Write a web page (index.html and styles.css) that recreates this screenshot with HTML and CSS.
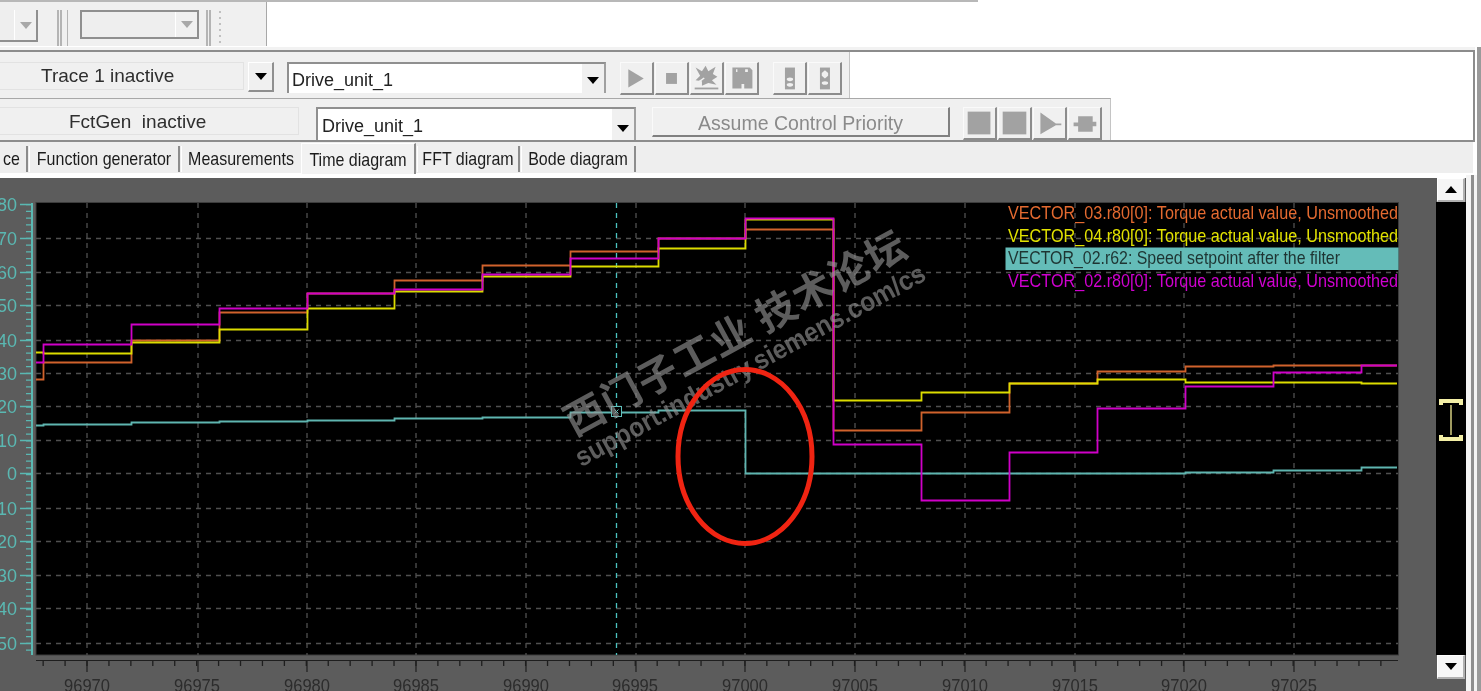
FILE: index.html
```html
<!DOCTYPE html>
<html lang="en">
<head>
    <meta charset="UTF-8" />
    <meta name="viewport" content="width=device-width, initial-scale=1.0" />
    <title>Time diagram</title>
    <link rel="stylesheet" href="styles.css">
</head>
<body>

    <!-- Top toolbar -->
    <div class="top-strip">
        <div class="top-tools">
            <div class="mini-combo first"><span class="combo-btn"><i class="arrow gray"></i></span></div>
            <div class="grip"></div>
            <div class="grip-bar"></div>
            <div class="mini-combo second"><span class="combo-btn"><i class="arrow gray"></i></span></div>
            <div class="grip"></div>
            <div class="dots"></div>
        </div>
    </div>

    <div class="upper-frame">
        <!-- Trace row -->
        <div class="control-row trace-row">
            <div class="status-label trace-label">Trace 1 inactive</div>
            <button class="arrow-btn"><i class="arrow"></i></button>
            <div class="combo trace-combo">
                <span>Drive_unit_1</span>
                <span class="combo-btn"><i class="arrow"></i></span>
            </div>
            <div class="icon-group">
                <button class="icon-btn"><svg viewBox="0 0 34 33"><path d="M8 7 L25 17 L8 27 Z"/></svg></button>
                <button class="icon-btn"><svg viewBox="0 0 34 33"><rect x="11" y="11" width="12" height="12"/></svg></button>
                <button class="icon-btn"><svg viewBox="0 0 34 33"><path d="M5 5 L12 9 L16 3 L19 9 L27 4 L24 12 L29 15 L23 19 L28 24 L19 22 L12 25 L12 20 L5 19 L10 14 Z"/><path d="M4 27 L30 27 L30 29 L4 29 Z"/><path class="cut" d="M5 22 L14 16 L15 17 L6 24 Z"/></svg></button>
                <button class="icon-btn"><svg viewBox="0 0 34 33"><path d="M7 5 H26 L29 8 V28 H20 V23 H17 V28 H7 Z M11 7 L11 10 L12.5 10 L12.5 7 Z M21 7 V10 H24 V7 Z" fill-rule="evenodd"/></svg></button>
            </div>
            <div class="icon-group">
                <button class="icon-btn"><svg viewBox="0 0 34 33"><path d="M12 5 H23 V29 H12 Z"/><ellipse class="cut" cx="17.5" cy="18" rx="3.5" ry="2"/><ellipse class="cut" cx="17.5" cy="24" rx="3.5" ry="2"/></svg></button>
                <button class="icon-btn"><svg viewBox="0 0 34 33"><path d="M12 5 H23 V29 H12 Z"/><path class="cut" d="M14 11 L17.5 8 L21 11 L21 14 L17.5 17 L14 14 Z"/><ellipse class="cut" cx="17.5" cy="22" rx="3.5" ry="2"/></svg></button>
            </div>
        </div>

        <!-- Function generator row -->
        <div class="control-row fct-row">
            <div class="status-label fct-label">FctGen&nbsp; inactive</div>
            <div class="combo fct-combo">
                <span>Drive_unit_1</span>
                <span class="combo-btn"><i class="arrow"></i></span>
            </div>
            <button class="assume-btn">Assume Control Priority</button>
            <div class="icon-group fct-icons">
                <button class="icon-btn"><svg viewBox="0 0 34 33"><rect x="4" y="4" width="25" height="25"/></svg></button>
                <button class="icon-btn"><svg viewBox="0 0 34 33"><rect x="4" y="4" width="26" height="25"/></svg></button>
                <button class="icon-btn"><svg viewBox="0 0 34 33"><path d="M7 5 L24 17 H30 V19 H24 L7 29 Z"/></svg></button>
                <button class="icon-btn"><svg viewBox="0 0 34 33"><path d="M10 9 H26 V15 H30 V20 H26 V26 H10 V20 H5 V16 H10 Z"/></svg></button>
            </div>
        </div>
    </div>

    <!-- Tabs -->
    <div class="tab-bar">
        <div class="tab tab-cut"><span>ce</span></div>
        <div class="tab tab-fn"><span>Function generator</span></div>
        <div class="tab tab-meas"><span>Measurements</span></div>
        <div class="tab tab-time active"><span>Time diagram</span></div>
        <div class="tab tab-fft"><span>FFT diagram</span></div>
        <div class="tab tab-bode"><span>Bode diagram</span></div>
    </div>

    <!-- Plot area -->
    <div class="plot-panel">
        <svg class="chart" viewBox="0 178 1436 513">
            <rect class="plot-bg" x="36" y="202.5" width="1362.5" height="452.5"/>

            <!-- grid -->
            <path class="grid" d="M36 238.5H1398 M36 272.5H1398 M36 305.5H1398 M36 340.5H1398 M36 373.5H1398 M36 406.5H1398 M36 440.5H1398 M36 473.5H1398 M36 508.5H1398 M36 541.5H1398 M36 575.5H1398 M36 608.5H1398 M36 643.5H1398"/>
            <path class="grid" d="M87 203V655 M198 203V655 M307 203V655 M416 203V655 M526 203V655 M636 203V655 M745 203V655 M855 203V655 M965 203V655 M1075 203V655 M1184 203V655 M1294 203V655"/>

            <!-- left axis -->
            <path class="axis-y" d="M32 203V655"/>
            <line class="axis-minor" x1="28.5" x2="28.5" y1="204" y2="655"/>
            <path class="axis-major" d="M20 204.5H31 M20 238.5H31 M20 272.5H31 M20 305.5H31 M20 340.5H31 M20 373.5H31 M20 406.5H31 M20 440.5H31 M20 473.5H31 M20 508.5H31 M20 541.5H31 M20 575.5H31 M20 608.5H31 M20 643.5H31"/>
            <g class="y-labels">
                <text x="17" y="211">80</text>
                <text x="17" y="245">70</text>
                <text x="17" y="279">60</text>
                <text x="17" y="312">50</text>
                <text x="17" y="347">40</text>
                <text x="17" y="380">30</text>
                <text x="17" y="413">20</text>
                <text x="17" y="447">10</text>
                <text x="17" y="480">0</text>
                <text x="17" y="515">10</text>
                <text x="17" y="548">20</text>
                <text x="17" y="582">30</text>
                <text x="17" y="615">40</text>
                <text x="17" y="650">50</text>
            </g>

            <!-- bottom axis -->
            <path class="axis-x" d="M36 660.5H1398"/>
            <line class="axis-x-minor" x1="42.5" x2="1398" y1="663.5" y2="663.5"/>
            <path class="axis-x-major" d="M87 661V672 M198 661V672 M307 661V672 M416 661V672 M526 661V672 M636 661V672 M745 661V672 M855 661V672 M965 661V672 M1075 661V672 M1184 661V672 M1294 661V672"/>
            <g class="x-labels">
                <text x="87" y="692" textLength="46" lengthAdjust="spacingAndGlyphs">96970</text>
                <text x="197" y="692" textLength="46" lengthAdjust="spacingAndGlyphs">96975</text>
                <text x="307" y="692" textLength="46" lengthAdjust="spacingAndGlyphs">96980</text>
                <text x="416" y="692" textLength="46" lengthAdjust="spacingAndGlyphs">96985</text>
                <text x="526" y="692" textLength="46" lengthAdjust="spacingAndGlyphs">96990</text>
                <text x="635" y="692" textLength="46" lengthAdjust="spacingAndGlyphs">96995</text>
                <text x="745" y="692" textLength="46" lengthAdjust="spacingAndGlyphs">97000</text>
                <text x="855" y="692" textLength="46" lengthAdjust="spacingAndGlyphs">97005</text>
                <text x="965" y="692" textLength="46" lengthAdjust="spacingAndGlyphs">97010</text>
                <text x="1075" y="692" textLength="46" lengthAdjust="spacingAndGlyphs">97015</text>
                <text x="1184" y="692" textLength="46" lengthAdjust="spacingAndGlyphs">97020</text>
                <text x="1294" y="692" textLength="46" lengthAdjust="spacingAndGlyphs">97025</text>
            </g>

            <!-- cursor -->
            <line class="cursor" x1="616.5" x2="616.5" y1="203" y2="655"/>

            <!-- traces -->
            <path class="trace orange" d="M36 379.5H43.5V362.5H131.5V340.5H219.5V312.5H307.5V293.5H394.5V280.5H482.5V265.5H570.5V251.5H658.5V238.5H745.5V229.5H833.5V430.5H921.5V412.5H1009.5V383.5H1097.5V371.5H1185.5V366.5H1273.5V365.5H1397"/>
            <path class="trace yellow" d="M36 352.5H43.5V353.5H131.5V342.5H219.5V329.5H307.5V308.5H394.5V291.5H482.5V276.5H570.5V266.5H658.5V248.5H745.5V219.5H833.5V400.5H921.5V392.5H1009.5V383.5H1097.5V379.5H1185.5V382.5H1361.5V383.5H1397"/>
            <path class="trace teal" d="M36 425.5H43.5V424.5H131.5V422.5H219.5V421.5H307.5V420.5H394.5V418.5H482.5V417.5H570.5V414.5H570.5V412.5H658.5V410.5H745.5V473.5H1185.5V472.5H1273.5V470.5H1361.5V467.5H1397"/>
            <path class="trace magenta" d="M36 362.5H43.5V344.5H131.5V324.5H219.5V308.5H307.5V293.5H394.5V289.5H482.5V274.5H570.5V258.5H658.5V238.5H745.5V218.5H833.5V444.5H921.5V500.5H1009.5V452.5H1097.5V408.5H1185.5V386.5H1273.5V372.5H1361.5V365.5H1397"/>

            <!-- cursor marker -->
            <g class="marker">
                <rect x="611.5" y="406.5" width="10" height="10"/>
                <path d="M614.5 409.5L618.5 413.5 M618.5 409.5L614.5 413.5"/>
            </g>

            <!-- legend -->
            <rect class="legend-sel" x="1005.5" y="247.5" width="393" height="22.5"/>
            <g class="legend">
                <text class="orange-text" x="1008" y="219" textLength="390" lengthAdjust="spacingAndGlyphs">VECTOR_03.r80[0]: Torque actual value, Unsmoothed</text>
                <text class="yellow-text" x="1008" y="241.5" textLength="390" lengthAdjust="spacingAndGlyphs">VECTOR_04.r80[0]: Torque actual value, Unsmoothed</text>
                <text class="sel-text" x="1008" y="264" textLength="332" lengthAdjust="spacingAndGlyphs">VECTOR_02.r62: Speed setpoint after the filter</text>
                <text class="magenta-text" x="1008" y="286.5" textLength="390" lengthAdjust="spacingAndGlyphs">VECTOR_02.r80[0]: Torque actual value, Unsmoothed</text>
            </g>

            <!-- watermark -->
            <g class="watermark" transform="translate(574 437) rotate(-28.5)">
                <text class="wm-cn" x="0" y="0" textLength="382">西门子工业 技术论坛</text>
                <text class="wm-en" x="-8" y="30" textLength="394" lengthAdjust="spacingAndGlyphs">support.industry.siemens.com/cs</text>
            </g>

            <!-- red mark -->
            <ellipse class="red-ring" cx="745" cy="456.5" rx="67" ry="87"/>
        </svg>

        <div class="scroll-col">
            <button class="scroll-btn up"><i class="arrow up"></i></button>
            <div class="scroll-track">
                <svg class="zoom-handle" viewBox="0 0 24 42">
                    <path d="M2 6V2H22V6 M2 36V40H22V36" class="handle-thick"/>
                    <path d="M12 6V36" class="handle-thin"/>
                </svg>
            </div>
            <button class="scroll-btn down"><i class="arrow"></i></button>
        </div>
        <div class="right-frame"></div>
    </div>

</body>
</html>
```

FILE: styles.css
```css
/* Global styles */
html,
body {
    margin: 0;
    height: 691px;
    overflow: hidden;
}

body {
    width: 1481px;
    background: linear-gradient(90deg, #fff 1477px, #9a9a9a 1477px) 0 47px / 100% 100% no-repeat;
    font-family: "Liberation Sans", Arial, sans-serif;
    color: #222;
    filter: blur(0.35px);
}

button {
    font-family: inherit;
    padding: 0;
    margin: 0;
}

/* Arrows */
.arrow {
    display: block;
    width: 0;
    height: 0;
    border-left: 6px solid transparent;
    border-right: 6px solid transparent;
    border-top: 7px solid #000;
}

.arrow.gray {
    border-top-color: #a8a8a8;
}

.arrow.up {
    border-top: 0;
    border-bottom: 7px solid #000;
}

/* Top toolbar */
.top-strip {
    height: 46px;
    box-sizing: border-box;
    border-top: 2px solid transparent;
    background: linear-gradient(#b8b8b8 0, #b8b8b8 2px, transparent 2px) 0 -2px / 978px 2px no-repeat;
}

.top-tools {
    width: 267px;
    height: 44px;
    box-sizing: border-box;
    padding-top: 8px;
    display: flex;
    background-color: #f0f0f0;
    border-right: 1px solid #a8a8a8;
}

.mini-combo {
    height: 32px;
    box-sizing: border-box;
    display: flex;
    justify-content: flex-end;
    background-color: #eee;
}

.mini-combo.first {
    width: 38px;
    border-right: 2px solid #8f8f8f;
    border-bottom: 2px solid #8f8f8f;
}

.mini-combo.second {
    width: 119px;
    height: 29px;
    border: 2px solid #8f8f8f;
    margin-left: 10px;
}

.mini-combo .combo-btn {
    width: 22px;
    background-color: #f0f0f0;
    border-left: 1px solid #fff;
    display: flex;
    align-items: center;
    justify-content: center;
    padding-top: 0;
}

.grip {
    width: 5px;
    height: 36px;
    margin-left: 19px;
    border-left: 2px solid #b4b4b4;
    border-right: 2px solid #b4b4b4;
    box-sizing: border-box;
}

.grip-bar {
    width: 3px;
    height: 36px;
    margin-left: 5px;
    border-left: 1px solid #b4b4b4;
    box-sizing: border-box;
}

.mini-combo.second + .grip {
    margin-left: 7px;
}

.dots {
    width: 2px;
    height: 32px;
    margin: 1px 0 0 8px;
    background: repeating-linear-gradient(#c0c0c0 0, #c0c0c0 2px, transparent 2px, transparent 6px);
}

/* Control rows */
.upper-frame {
    width: 1475px;
    margin-top: 4px;
    box-sizing: border-box;
    border-top: 2px solid #8c8c8c;
    border-right: 2px solid #8c8c8c;
    border-bottom: 2px solid #8c8c8c;
    box-shadow: 0 -3px 0 #f2f2f2;
    background-color: #fff;
}

.control-row {
    display: flex;
    box-sizing: border-box;
    background-color: #f0f0f0;
}

.trace-row {
    height: 46px;
    width: 850px;
    padding-top: 10px;
    border-right: 1px solid #c4c4c4;
}

.fct-row {
    height: 42px;
    width: 1111px;
    padding-top: 8px;
    border-top: 1px solid #a8a8a8;
    border-right: 1px solid #c4c4c4;
    overflow: hidden;
}

.status-label {
    box-sizing: border-box;
    border: 1px solid #e2e2e2;
    border-left: 0;
    font-size: 19px;
    white-space: nowrap;
    color: #2e2e2e;
}

.trace-label {
    width: 244px;
    height: 28px;
    line-height: 25px;
    padding-left: 41px;
}

.fct-label {
    width: 299px;
    height: 28px;
    line-height: 27px;
    padding-left: 69px;
}

.arrow-btn {
    width: 26px;
    height: 30px;
    margin-left: 4px;
    background-color: #f0f0f0;
    border: 1px solid #fff;
    border-right: 2px solid #8f8f8f;
    border-bottom: 2px solid #8f8f8f;
    display: flex;
    align-items: center;
    justify-content: center;
}

.combo {
    box-sizing: border-box;
    display: flex;
    justify-content: space-between;
    background-color: #fff;
    border-top: 2px solid #8f8f8f;
    border-left: 2px solid #8f8f8f;
    border-right: 2px solid #a0a0a0;
    font-size: 18px;
    color: #222;
}

.combo > span:first-child {
    padding: 6px 0 0 3px;
}

.trace-combo {
    width: 319px;
    height: 31px;
    margin-left: 13px;
}

.fct-combo {
    width: 320px;
    height: 36px;
    margin-left: 17px;
}

.fct-combo > span:first-child {
    padding-top: 7px;
    padding-left: 4px;
}

.combo-btn {
    width: 22px;
    background-color: #f0f0f0;
    display: flex;
    align-items: center;
    justify-content: center;
    padding-top: 4px;
    box-sizing: border-box;
}

.icon-group {
    display: flex;
    gap: 1px;
    margin-left: 14px;
}

.icon-btn {
    width: 34px;
    height: 33px;
    box-sizing: border-box;
    background-color: #f0f0f0;
    border: 1px solid #fafafa;
    border-right: 2px solid #8c8c8c;
    border-bottom: 2px solid #8c8c8c;
}

.icon-btn svg {
    display: block;
    width: 31px;
    height: 30px;
    fill: #a2a2a2;
}

.icon-btn svg .cut {
    fill: #f0f0f0;
}

.assume-btn {
    width: 298px;
    height: 30px;
    margin-left: 16px;
    box-sizing: border-box;
    background-color: #f0f0f0;
    border: 1px solid #fafafa;
    border-right: 2px solid #808080;
    border-bottom: 2px solid #808080;
    padding-top: 3px;
    font-size: 19.5px;
    color: #8a8a8a;
}

.fct-icons {
    margin-left: 13px;
}

/* Tabs */
.tab-bar {
    width: 1473px;
    height: 36px;
    box-sizing: border-box;
    display: flex;
    border-bottom: 5px solid #fff;
    background-color: #eeeeee;
    padding-top: 4px;
}

.tab {
    height: 26px;
    box-sizing: border-box;
    border-right: 2px solid #8c8c8c;
    border-left: 1px solid #fff;
    margin-right: 1px;
    font-size: 16px;
    line-height: 25px;
    text-align: center;
    white-space: nowrap;
    color: #1c1c1c;
}

.tab span {
    display: inline-block;
    transform: scaleY(1.12);
}

.tab-cut { width: 28px; text-align: right; padding-right: 6px; border-left: 0; }
.tab-fn { width: 151px; }
.tab-meas { width: 119px; border-right: 0; }
.tab-time { width: 115px; }
.tab-fft { width: 103px; }
.tab-bode { width: 115px; }

.tab.active {
    height: 31px;
    margin-top: -3px;
    padding-top: 3px;
    background-color: #f2f2f2;
    border-left: 1px solid #fff;
    border-top: 1px solid #fff;
}

/* Plot area */
.plot-panel {
    height: 513px;
    display: flex;
    background-color: #5c5c5c;
}

.chart {
    display: block;
    width: 1436px;
    height: 513px;
    flex: none;
}

.plot-bg {
    fill: #000;
    stroke: #3c3c3c;
    stroke-width: 1;
}

.grid {
    fill: none;
    stroke: #505050;
    stroke-width: 1.3;
    stroke-dasharray: 5 5;
}

.axis-y,
.axis-major,
.axis-minor {
    fill: none;
    stroke: #5ab8b2;
}

.axis-y {
    stroke-width: 2;
}

.axis-major {
    stroke-width: 1.3;
}

.axis-minor {
    stroke-width: 5;
    stroke-dasharray: 1.2 5.55;
}

.y-labels text {
    font-size: 18px;
    fill: #5ab8b2;
    text-anchor: end;
}

.axis-x,
.axis-x-major,
.axis-x-minor {
    fill: none;
    stroke: #1e1e1e;
    stroke-width: 1.2;
}

.axis-x-minor {
    stroke-width: 5;
    stroke-dasharray: 1.3 20.63;
}

.x-labels text {
    font-size: 19px;
    fill: #2c2c2c;
    text-anchor: middle;
}

.cursor {
    stroke: #4cc4c0;
    stroke-width: 1.3;
    stroke-dasharray: 5 5;
}

.trace {
    fill: none;
    stroke-width: 1.8;
}

.trace.orange { stroke: #d0622c; }
.trace.yellow { stroke: #dcdc00; }
.trace.teal { stroke: #5fb5b0; }
.trace.magenta { stroke: #d000c8; }

.marker rect,
.marker path {
    fill: #000;
    stroke: #5fc0bc;
    stroke-width: 1;
}

.legend-sel {
    fill: #64bcb8;
}

.legend text {
    font-size: 19px;
}

.orange-text { fill: #e46a30; }
.yellow-text { fill: #e2e200; }
.sel-text { fill: #1e3432; }
.magenta-text { fill: #d000d0; }

.watermark text {
    fill: rgba(150, 150, 150, 0.62);
    font-family: "Liberation Sans", "Noto Sans CJK SC", sans-serif;
}

.watermark .wm-cn {
    font-size: 40px;
    font-weight: bold;
    font-family: "Noto Sans CJK SC", sans-serif;
}

.wm-en {
    font-size: 27px;
    font-weight: bold;
}

.red-ring {
    fill: none;
    stroke: #f02412;
    stroke-width: 5;
}

/* Right scroller */
.scroll-col {
    width: 30px;
    flex: none;
    display: flex;
    flex-direction: column;
}

.scroll-btn {
    width: 28px;
    height: 24px;
    flex: none;
    background-color: #f6f6f6;
    border: 1px solid #fff;
    border-right: 2px solid #b0b0b0;
    border-bottom: 2px solid #b0b0b0;
    display: flex;
    align-items: center;
    justify-content: center;
    margin-left: 1px;
    box-sizing: border-box;
}

.scroll-track {
    height: 453px;
    flex: none;
    background-color: #000;
    display: flex;
    justify-content: center;
    padding-top: 197px;
    box-sizing: border-box;
}

.zoom-handle {
    width: 24px;
    height: 42px;
    fill: none;
}

.handle-thick {
    stroke: #f4efa6;
    stroke-width: 4;
}

.handle-thin {
    stroke: #d6cf80;
    stroke-width: 1.5;
}

.right-frame {
    flex: 1;
    margin-top: -3px;
    background: linear-gradient(90deg, #f4f4f4 5px, #8e8e8e 5px, #8e8e8e 8px, #f4f4f4 8px, #f4f4f4 11px, #9a9a9a 11px);
}
```
